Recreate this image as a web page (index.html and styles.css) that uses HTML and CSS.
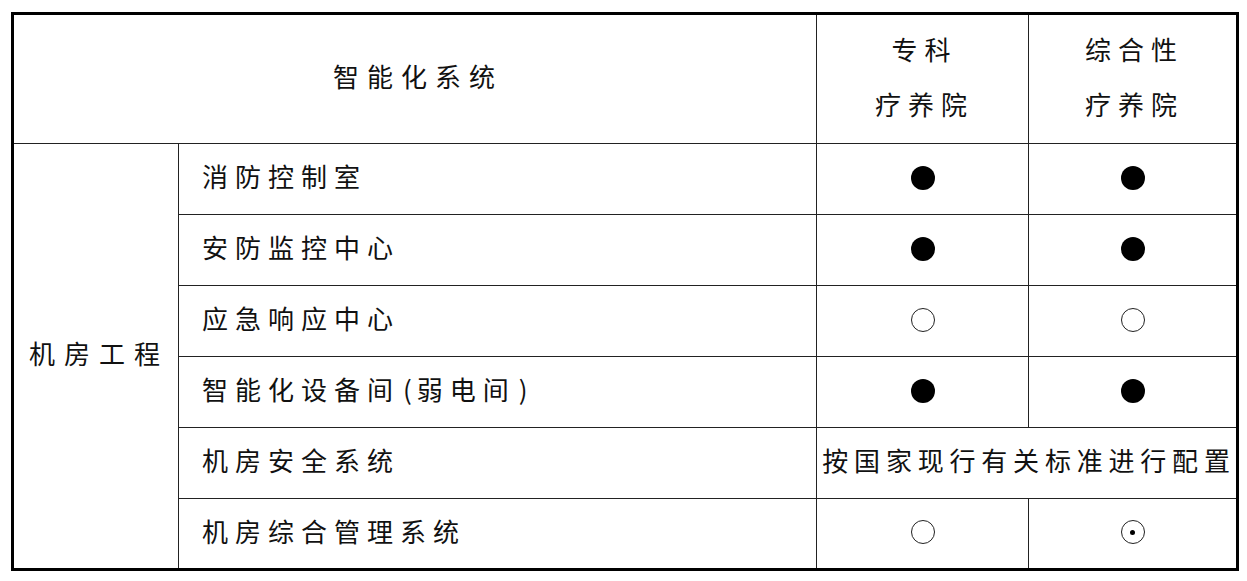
FILE: index.html
```html
<!DOCTYPE html>
<html lang="zh-CN">
<head>
<meta charset="utf-8">
<link rel="stylesheet" href="styles.css">
</head>
<body>
<table class="spec">
  <colgroup>
    <col class="c1"><col class="c2"><col class="c3"><col class="c4">
  </colgroup>
  <thead>
    <tr class="head">
      <th colspan="2" class="title">智能化系统</th>
      <th class="mid">专科<br>疗养院</th>
      <th class="mid">综合性<br>疗养院</th>
    </tr>
  </thead>
  <tbody>
    <tr>
      <td rowspan="6" class="group">机房工程</td>
      <td class="name">消防控制室</td>
      <td class="mark"><span class="dot full"></span></td>
      <td class="mark"><span class="dot full"></span></td>
    </tr>
    <tr>
      <td class="name">安防监控中心</td>
      <td class="mark"><span class="dot full"></span></td>
      <td class="mark"><span class="dot full"></span></td>
    </tr>
    <tr>
      <td class="name">应急响应中心</td>
      <td class="mark"><span class="dot open"></span></td>
      <td class="mark"><span class="dot open"></span></td>
    </tr>
    <tr>
      <td class="name">智能化设备间<span class="paren">(</span>弱电间<span class="paren">)</span></td>
      <td class="mark"><span class="dot full"></span></td>
      <td class="mark"><span class="dot full"></span></td>
    </tr>
    <tr>
      <td class="name">机房安全系统</td>
      <td colspan="2" class="note">按国家现行有关标准进行配置</td>
    </tr>
    <tr>
      <td class="name">机房综合管理系统</td>
      <td class="mark"><span class="dot open"></span></td>
      <td class="mark"><span class="dot open center"></span></td>
    </tr>
  </tbody>
</table>
</body>
</html>
```

FILE: styles.css
```css
html, body {
  margin: 0;
  padding: 0;
  background: #ffffff;
}
body {
  padding: 12px 0 0 11px;
  font-family: "Noto Sans CJK SC", "Noto Sans CJK TC", sans-serif;
  color: #111;
}
.spec {
  border-collapse: collapse;
  table-layout: fixed;
  width: 1225px;
  border: 3px solid #000;
}
.c1 { width: 166px; }
.c2 { width: 638px; }
.c3 { width: 212px; }
.c4 { width: 209px; }
.spec th, .spec td {
  border: 1px solid #222;
  padding: 0 0 7px 0;
  font-weight: 400;
  font-size: 26px;
  letter-spacing: 7px;
  vertical-align: middle;
}
.spec .head th {
  height: 121px;
  text-align: center;
}
.spec .title {
  letter-spacing: 8px;
  padding-left: 6px;
}
.spec .mid {
  line-height: 55px;
  padding-left: 4px;
}
.spec tbody tr {
  height: 71px;
}
.spec .group {
  text-align: center;
  letter-spacing: 9px;
  padding-left: 6px;
}
.spec .name {
  padding-left: 23px;
  text-align: left;
}
.paren {
  letter-spacing: 5px;
  padding-left: 3px;
}
.spec .mark {
  text-align: center;
  line-height: 0;
  padding: 0 0 3px 0;
}
.spec .note {
  text-align: center;
  letter-spacing: 5.8px;
  white-space: nowrap;
  padding-left: 5px;
}
.dot {
  display: block;
  margin: 0 auto;
  width: 24px;
  height: 24px;
  border-radius: 50%;
  box-sizing: border-box;
  position: relative;
}
.full {
  background: #000;
}
.open {
  border: 1.5px solid #222;
}
.center::after {
  content: "";
  position: absolute;
  left: 50%;
  top: 50%;
  width: 5px;
  height: 5px;
  margin: -2.5px 0 0 -2.5px;
  border-radius: 50%;
  background: #000;
}
```
